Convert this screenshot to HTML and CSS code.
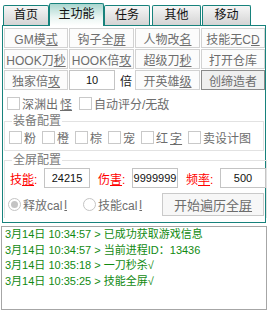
FILE: index.html
```html
<!DOCTYPE html>
<html lang="zh-CN">
<head>
  <meta charset="UTF-8" />
  <title>主功能</title>
  <link rel="stylesheet" href="styles.css">
</head>
<body>
  <!-- tab strip -->
  <div class="tabs">
    <div class="tab">首页</div>
    <div class="tab active">主功能</div>
    <div class="tab">任务</div>
    <div class="tab wide">其他</div>
    <div class="tab wide">移动</div>
  </div>

  <div class="panel">
    <div class="btn-grid">
      <button>GM模<u>式</u></button>
      <button>钩子全<u>屏</u></button>
      <button>人物改<u>名</u></button>
      <button>技能无C<u>D</u></button>
      <button>HOOK刀<u>秒</u></button>
      <button>HOOK倍<u>攻</u></button>
      <button>超级刀<u>秒</u></button>
      <button>打开仓库</button>
      <button>独家倍<u>攻</u></button>
      <div class="times">
        <input class="num" type="text" value="10" />
        <span>倍</span>
      </div>
      <button>开英雄<u>级</u></button>
      <button class="focused">创缔造者</button>
    </div>

    <div class="check-row">
      <label class="check"><span class="box"></span>深渊出<u>怪</u></label>
      <label class="check"><span class="box"></span>自动评分/无敌</label>
    </div>

    <fieldset class="group">
      <legend>装备配置</legend>
      <div class="check-row tight">
        <label class="check"><span class="box"></span>粉</label>
        <label class="check"><span class="box"></span>橙</label>
        <label class="check"><span class="box"></span>棕</label>
        <label class="check"><span class="box"></span>宠</label>
        <label class="check"><span class="box"></span>红<u>字</u></label>
        <label class="check"><span class="box"></span>卖设计图</label>
      </div>
    </fieldset>

    <fieldset class="group screen">
      <legend>全屏配置</legend>
      <div class="field-row">
        <span class="red">技<u>能</u>:</span>
        <input class="num" type="text" value="24215" />
        <span class="red">伤<u>害</u>:</span>
        <input class="num" type="text" value="9999999" />
        <span class="red">频<u>率</u>:</span>
        <input class="num" type="text" value="500" />
      </div>
      <div class="radio-row">
        <label class="radio"><span class="dot on"></span>释放cal<u>l</u></label>
        <label class="radio"><span class="dot"></span>技能cal<u>l</u></label>
        <button class="start">开始遍历全<u>屏</u></button>
      </div>
    </fieldset>
  </div>

  <div class="log">
    <div>3月14日 10:34:57 &gt; 已成功获取游戏信息</div>
    <div>3月14日 10:34:57 &gt; 当前进程ID：13436</div>
    <div>3月14日 10:35:18 &gt; 一刀秒杀√</div>
    <div>3月14日 10:35:25 &gt; 技能全屏√</div>
  </div>
</body>
</html>
```

FILE: styles.css
```css
body {
  margin: 0;
  width: 268px;
  background: #fff;
  font-family: "Liberation Sans", "Noto Sans CJK SC", sans-serif;
  font-size: 12px;
  color: #6d6d6d;
}
u {
  text-decoration: underline;
  text-underline-offset: 1px;
}

/* tabs */
.tabs {
  display: flex;
  align-items: flex-end;
  height: 25px;
  padding-left: 3px;
}
.tab {
  box-sizing: border-box;
  width: 46px;
  height: 20px;
  border: 1px solid #17827c;
  border-bottom: none;
  border-radius: 2px 2px 0 0;
  background: linear-gradient(#f6f6f6, #d4d4d4);
  color: #111;
  text-align: center;
  line-height: 19px;
}
.tab.wide {
  width: 49px;
  margin-left: 2px;
}
.tab.wide + .tab.wide {
  margin-left: 1px;
}
.tab.active {
  width: 55px;
  height: 23px;
  margin-bottom: -1px;
  line-height: 21px;
  background: linear-gradient(#a9d6cf, #e9f5f2 60%, #fff);
  position: relative;
  z-index: 1;
}

/* main panel */
.panel {
  box-sizing: border-box;
  width: 264px;
  height: 198px;
  margin-left: 2px;
  border: 1px solid #17827c;
  padding: 2px 0 0 1px;
}
.btn-grid {
  display: grid;
  grid-template-columns: 64px 65px 65px 64px;
  grid-auto-rows: 20px;
  column-gap: 1px;
  row-gap: 1px;
}
button {
  font-family: inherit;
  font-size: 12px;
  color: #6d6d6d;
  background: #fcfcfc;
  border: 1px solid #d2d2d2;
  padding: 0;
  margin: 0;
  white-space: nowrap;
}
button.focused {
  border-color: #8a8a8a;
  background: #efefef;
}
.times {
  display: flex;
  align-items: center;
  gap: 5px;
}
.times span {
  color: #222;
}
input.num {
  box-sizing: border-box;
  width: 46px;
  height: 20px;
  border: 1px solid #c4c4c4;
  padding: 0;
  font-family: "Liberation Sans", Arial, sans-serif;
  font-size: 11px;
  color: #111;
  text-align: center;
}

/* checkboxes */
.check-row {
  display: flex;
  gap: 7px;
  padding: 5px 0 0 3px;
}
.check {
  display: flex;
  align-items: center;
  gap: 2px;
  white-space: nowrap;
}
.box {
  box-sizing: border-box;
  width: 13px;
  height: 13px;
  border: 1px solid #c9c9c9;
  background: #fff;
}

/* group boxes */
.group {
  margin: 3px 0 0 0;
  width: 260px;
  box-sizing: border-box;
  border: 1px solid #e2e2e2;
  padding: 0 0 4px 0;
}
.group legend {
  padding: 0 1px;
  margin-left: 7px;
  color: #7a7a7a;
  line-height: 13px;
}
.group .tight {
  padding: 1px 0 0 4px;
  gap: 6px;
}
.group.screen {
  margin-top: 3px;
  height: 64px;
  border-bottom: none;
}
.field-row {
  display: flex;
  align-items: center;
  padding: 1px 0 0 5px;
}
.field-row .red {
  color: #ff0000;
  width: 34px;
}
.field-row .red + input {
  margin-right: 8px;
}
.field-row input:last-child {
  margin-right: 0;
}
.radio-row {
  display: flex;
  align-items: center;
  padding: 5px 0 0 3px;
  white-space: nowrap;
}
.radio {
  display: flex;
  align-items: center;
  flex-shrink: 0;
  gap: 2px;
  margin-right: 16px;
}
.dot {
  box-sizing: border-box;
  width: 13px;
  height: 13px;
  border: 1px solid #c4c4c4;
  border-radius: 50%;
  display: flex;
  align-items: center;
  justify-content: center;
}
.dot.on::after {
  content: "";
  width: 7px;
  height: 7px;
  border-radius: 50%;
  background: #c4c4c4;
}
button.start {
  flex-shrink: 0;
  width: 102px;
  height: 23px;
  margin-left: auto;
  margin-right: 2px;
  background: #f7f7f7;
  border-color: #cacaca;
  font-size: 13px;
}

/* log box */
.log {
  box-sizing: border-box;
  width: 266px;
  height: 84px;
  margin: 3px 0 0 1px;
  border: 1px solid #a6a6a6;
  padding: 0 3px;
  color: #118a11;
  line-height: 15.5px;
  font-size: 11px;
}
```
